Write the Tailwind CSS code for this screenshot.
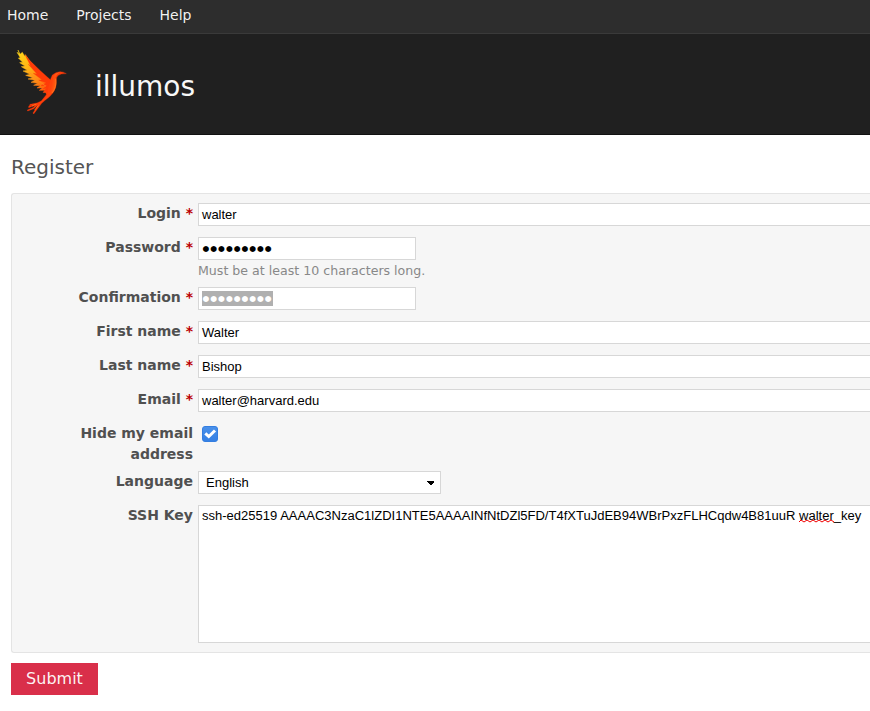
<!DOCTYPE html>
<html lang="en">
<head>
<meta charset="utf-8">
<title>illumos - Register</title>
<script src="https://cdn.jsdelivr.net/npm/@tailwindcss/browser@4"></script>
</head>
<body class="h-[711px] w-[870px] overflow-hidden bg-white font-['DejaVu_Sans',sans-serif] text-[14px] leading-[21px] text-[#505050]">
<nav class="flex h-[34px] gap-[28px] border-b border-[#3a3a3a] bg-[#2d2d2d] pt-[5px] pl-[7px] text-white/95">
  <a>Home</a><a>Projects</a><a>Help</a>
</nav>
<header class="flex h-[101px] border-b border-[#111] bg-[#202020] pl-[15px]">
  <svg class="mt-[15px] h-[66px] w-[53px] shrink-0" viewBox="45 27 159 198">
    <defs><linearGradient id="wing" gradientUnits="userSpaceOnUse" x1="58" y1="40" x2="145" y2="145"><stop offset="0" stop-color="#ffd418"/><stop offset=".35" stop-color="#ffb514"/><stop offset=".7" stop-color="#ff8b16"/><stop offset="1" stop-color="#ff5a0c"/></linearGradient>
    <linearGradient id="body" x1="0" y1="0" x2="1" y2=".25"><stop offset="0" stop-color="#ff3d08"/><stop offset=".7" stop-color="#ff430b"/><stop offset="1" stop-color="#ff7a1c"/></linearGradient></defs>
    <path fill="url(#wing)" stroke="url(#wing)" stroke-width="1.5" d="M54 30L60 43L67 37L74 49L76 44L90 64L118 94L151 122L140 158L130 157L135 151L118 151L127 144L111 144L121 137L101 136L113 130L93 127L105 121L84 117L98 113L77 106L90 103L69 93L82 91L64 80L75 78L59 68L68 67L55 54L61 53L51 37L58 42Z"/>
    <path fill="#ff3b08" stroke="#ff3b08" stroke-width="1" d="M75 44L90 62L121 92L151 119L157 105Q167 96 180 95Q190 95 199 101Q183 100 175 106Q168 111 169 124Q170 145 158 160Q147 174 135 181L125 190L101 222L99 219L110 202L115 194L101 206L83 213L82 210L99 203L106 196L86 203L86 199L102 194L88 197L90 193L111 189L124 183L139 164L137 154L130 158L139 144L129 147L141 136L123 137L139 128L115 121L126 119L100 100L111 102L85 73L92 78Z"/>
    <path fill="url(#body)" d="M152 121L158 107Q168 98 180 97Q169 102 166 114Q170 137 160 154Q150 169 136 178L122 188L103 215L118 188L137 173Q145 164 143 150Z"/>
    <path fill="none" stroke="#ff891f" stroke-width="2" d="M167 116Q171 142 156 159M88 97L118 124L138 139M109 192L96 198M115 196L104 210"/>
  </svg>
  <h1 class="mt-[33px] ml-[27px] text-[28px] leading-[40px] font-normal text-[#f8f8f8]">illumos</h1>
</header>
<main class="pt-[17px] pl-[11px]">
  <h2 class="h-[41px] text-[20px] leading-[30px] text-[#555]">Register</h2>
  <form>
    <section class="flex h-[460px] flex-col rounded-l-[3px] border border-r-0 border-[#e4e4e4] bg-[#f6f6f6] pt-[9px] pl-[56px]">
      <div class="flex h-[34px] items-start gap-[5px]"><label class="w-[125px] text-right font-bold">Login <span class="text-[#bb0000]">*</span></label><div class="flex h-[23px] flex-1 items-center border border-r-0 border-[#d7d7d7] bg-white pl-[3px] font-['Liberation_Sans',sans-serif] text-[13px] leading-[15px] text-black">walter</div></div>
      <div class="flex h-[50px] items-start gap-[5px]"><label class="w-[125px] text-right font-bold">Password <span class="text-[#bb0000]">*</span></label><div><div class="flex h-[23px] w-[218px] items-center border border-[#d7d7d7] bg-white pl-[3px] text-[7.8px] leading-[15px] tracking-[0.99px] text-black"><span class="block h-[15px] pl-[0.5px] leading-[15px]">●●●●●●●●●</span></div><p class="text-[12.6px] leading-[21px] text-[#888]">Must be at least 10 characters long.</p></div></div>
      <div class="flex h-[34px] items-start gap-[5px]"><label class="w-[125px] text-right font-bold whitespace-nowrap">Confirmation <span class="text-[#bb0000]">*</span></label><div class="flex h-[23px] w-[218px] items-center border border-[#d7d7d7] bg-white pl-[3px] text-[7.8px] leading-[15px] tracking-[0.99px] text-white"><span class="block h-[15px] w-[71px] bg-[#b0b0b0] pl-[0.5px] leading-[15px]">●●●●●●●●●</span></div></div>
      <div class="flex h-[34px] items-start gap-[5px]"><label class="w-[125px] text-right font-bold">First name <span class="text-[#bb0000]">*</span></label><div class="flex h-[23px] flex-1 items-center border border-r-0 border-[#d7d7d7] bg-white pl-[3px] font-['Liberation_Sans',sans-serif] text-[13px] leading-[15px] text-black">Walter</div></div>
      <div class="flex h-[34px] items-start gap-[5px]"><label class="w-[125px] text-right font-bold">Last name <span class="text-[#bb0000]">*</span></label><div class="flex h-[23px] flex-1 items-center border border-r-0 border-[#d7d7d7] bg-white pl-[3px] font-['Liberation_Sans',sans-serif] text-[13px] leading-[15px] text-black">Bishop</div></div>
      <div class="flex h-[34px] items-start gap-[5px]"><label class="w-[125px] text-right font-bold">Email <span class="text-[#bb0000]">*</span></label><div class="flex h-[23px] flex-1 items-center border border-r-0 border-[#d7d7d7] bg-white pl-[3px] font-['Liberation_Sans',sans-serif] text-[13px] leading-[15px] text-black">walter@harvard.edu</div></div>
      <div class="flex h-[48px] items-start gap-[5px]"><label class="w-[125px] text-right font-bold">Hide my email address</label>
        <svg class="mt-[3px] ml-[4px] size-[16px]" viewBox="0 0 16 16"><defs><linearGradient id="blue" x2="0" y2="1"><stop stop-color="#4a91ea"/><stop offset="1" stop-color="#3580e4"/></linearGradient></defs><rect x=".5" y=".5" width="15" height="15" rx="2.5" fill="url(#blue)" stroke="#347ee0"/><path d="M3.3 7.3L6.8 10.5L13 4.5" fill="none" stroke="#fff" stroke-width="3"/></svg></div>
      <div class="flex h-[34px] items-start gap-[5px]"><label class="w-[125px] text-right font-bold">Language</label><div class="flex h-[23px] w-[243px] items-center justify-between border border-[#d7d7d7] bg-white pr-[6px] pl-[7px] font-['Liberation_Sans',sans-serif] text-[13px] leading-[15px] text-black">English<svg class="mt-px h-[4px] w-[7px]" viewBox="0 0 7 4" shape-rendering="crispEdges"><path d="M0 0H7V1L4 4H3L0 1Z"/></svg></div></div>
      <div class="flex items-start gap-[5px]"><label class="w-[125px] text-right font-bold">SSH Key</label><div class="h-[138px] flex-1 border border-r-0 border-[#d7d7d7] bg-white pt-[2px] pl-[3px] font-['Liberation_Sans',sans-serif] text-[13.02px] leading-[15px] whitespace-nowrap text-black">ssh-ed25519 AAAAC3NzaC1lZDI1NTE5AAAAINfNtDZl5FD/T4fXTuJdEB94WBrPxzFLHCqdw4B81uuR <span class="relative">walter<svg class="absolute top-[11px] left-0 h-[4px] w-[35px]" viewBox="0 0 35 4"><path d="M0 3L2 1L5 3L8 1L11 3L14 1L17 3L20 1L23 3L26 1L29 3L32 1L35 3" fill="none" stroke="#f00000"/></svg></span>_key</div></div>
    </section>
    <button type="button" class="mt-[10px] block h-[32px] w-[87px] bg-[#d92f4a] pb-px text-[16px] leading-[30px] text-white/95">Submit</button>
  </form>
</main>
</body>
</html>
